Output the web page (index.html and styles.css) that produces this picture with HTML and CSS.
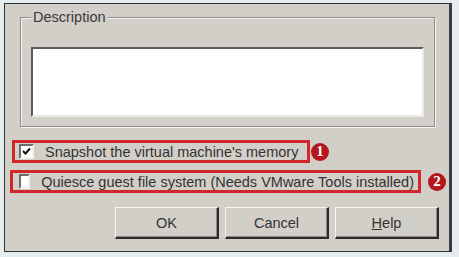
FILE: index.html
```html
<!DOCTYPE html>
<html lang="en">
<head>
    <meta charset="UTF-8">
    <title>Take Snapshot</title>
    <link rel="stylesheet" href="styles.css">
</head>
<body>
    <div class="dialog">
        <div class="group">
            <span class="legend">Description</span>
            <div class="textbox"></div>
        </div>

        <div class="option first">
            <label class="mark">
                <span class="check on">
                    <svg width="9" height="9" viewBox="0 0 9 9"><path d="M1 4 L3.5 6.5 L8 1.5" fill="none" stroke="#111" stroke-width="2"/></svg>
                </span>
                Snapshot the virtual machine's memory
            </label>
            <span class="num one">1</span>
        </div>
        <div class="option second">
            <label class="mark">
                <span class="check"></span>
                Quiesce guest file system (Needs VMware Tools installed)
            </label>
            <span class="num two">2</span>
        </div>

        <div class="buttons">
            <button>OK</button>
            <button>Cancel</button>
            <button><u>H</u>elp</button>
        </div>
    </div>
</body>
</html>
```

FILE: styles.css
```css
body {
    margin: 0;
    background-color: #e6edef;
    font-family: 'Liberation Sans', Arial, sans-serif;
    font-size: 14.5px;
    color: #333;
}
.dialog {
    margin: 3px 0 0 4px;
    width: 444px;
    height: 247px;
    background: #d2cfc8;
    border-top: 1px solid #2f3234;
    border-left: 1px solid #2f3234;
    border-right: 3px solid #3a3d3f;
    border-bottom: 1px solid #2f3234;
}
.group {
    margin: 13px 0 0 15px;
    width: 413px;
    height: 108px;
    border: 1px solid #8f8d88;
    box-shadow: inset 1px 1px 0 #f4f3f0, 1px 1px 0 #f4f3f0;
}
.legend {
    display: block;
    width: fit-content;
    margin: -9px 0 0 10px;
    padding: 0 2px;
    height: 16px;
    line-height: 16px;
    background: #d2cfc8;
    color: #3a3a3a;
}
.textbox {
    margin: 22px 0 0 10px;
    width: 389px;
    height: 66px;
    background: #fff;
    border-top: 2px solid #5c5c5c;
    border-left: 2px solid #5c5c5c;
    border-right: 2px solid #eceae6;
    border-bottom: 2px solid #eceae6;
}
.option {
    display: flex;
    align-items: center;
}
.option.first {
    margin: 13px 0 0 7px;
}
.option.second {
    margin: 7px 0 0 5px;
}
.mark {
    display: flex;
    align-items: center;
    height: 17px;
    border: 3px solid #d3252c;
    padding: 0 4px 0 4px;
    white-space: nowrap;
}
.first .mark {
    width: 284px;
}
.second .mark {
    width: 395px;
    padding-left: 6px;
}
.check {
    display: flex;
    align-items: center;
    justify-content: center;
    width: 11px;
    height: 11px;
    margin-right: 11px;
    background: #fff;
    border-top: 2px solid #6d6d6d;
    border-left: 2px solid #6d6d6d;
    border-right: 2px solid #f2f1ee;
    border-bottom: 2px solid #f2f1ee;
}
.num {
    display: flex;
    align-items: center;
    justify-content: center;
    width: 18px;
    height: 18px;
    border-radius: 50%;
    background: #b5151c;
    color: #fff;
    font-family: 'Liberation Serif', serif;
    font-weight: bold;
    font-size: 15px;
}
.num.one {
    margin-left: 1px;
}
.num.two {
    margin-left: 7px;
}
.buttons {
    display: flex;
    gap: 6px;
    margin: 14px 0 0 110px;
}
button {
    width: 104px;
    height: 32px;
    padding: 0;
    font-family: 'Liberation Sans', Arial, sans-serif;
    font-size: 14.5px;
    color: #333;
    background: #d2cfc8;
    border-top: 1px solid #f6f5f2;
    border-left: 1px solid #f6f5f2;
    border-right: 2px solid #2b2b2b;
    border-bottom: 2px solid #2b2b2b;
    box-shadow: inset -1px -1px 0 #8d8b86;
}
```
